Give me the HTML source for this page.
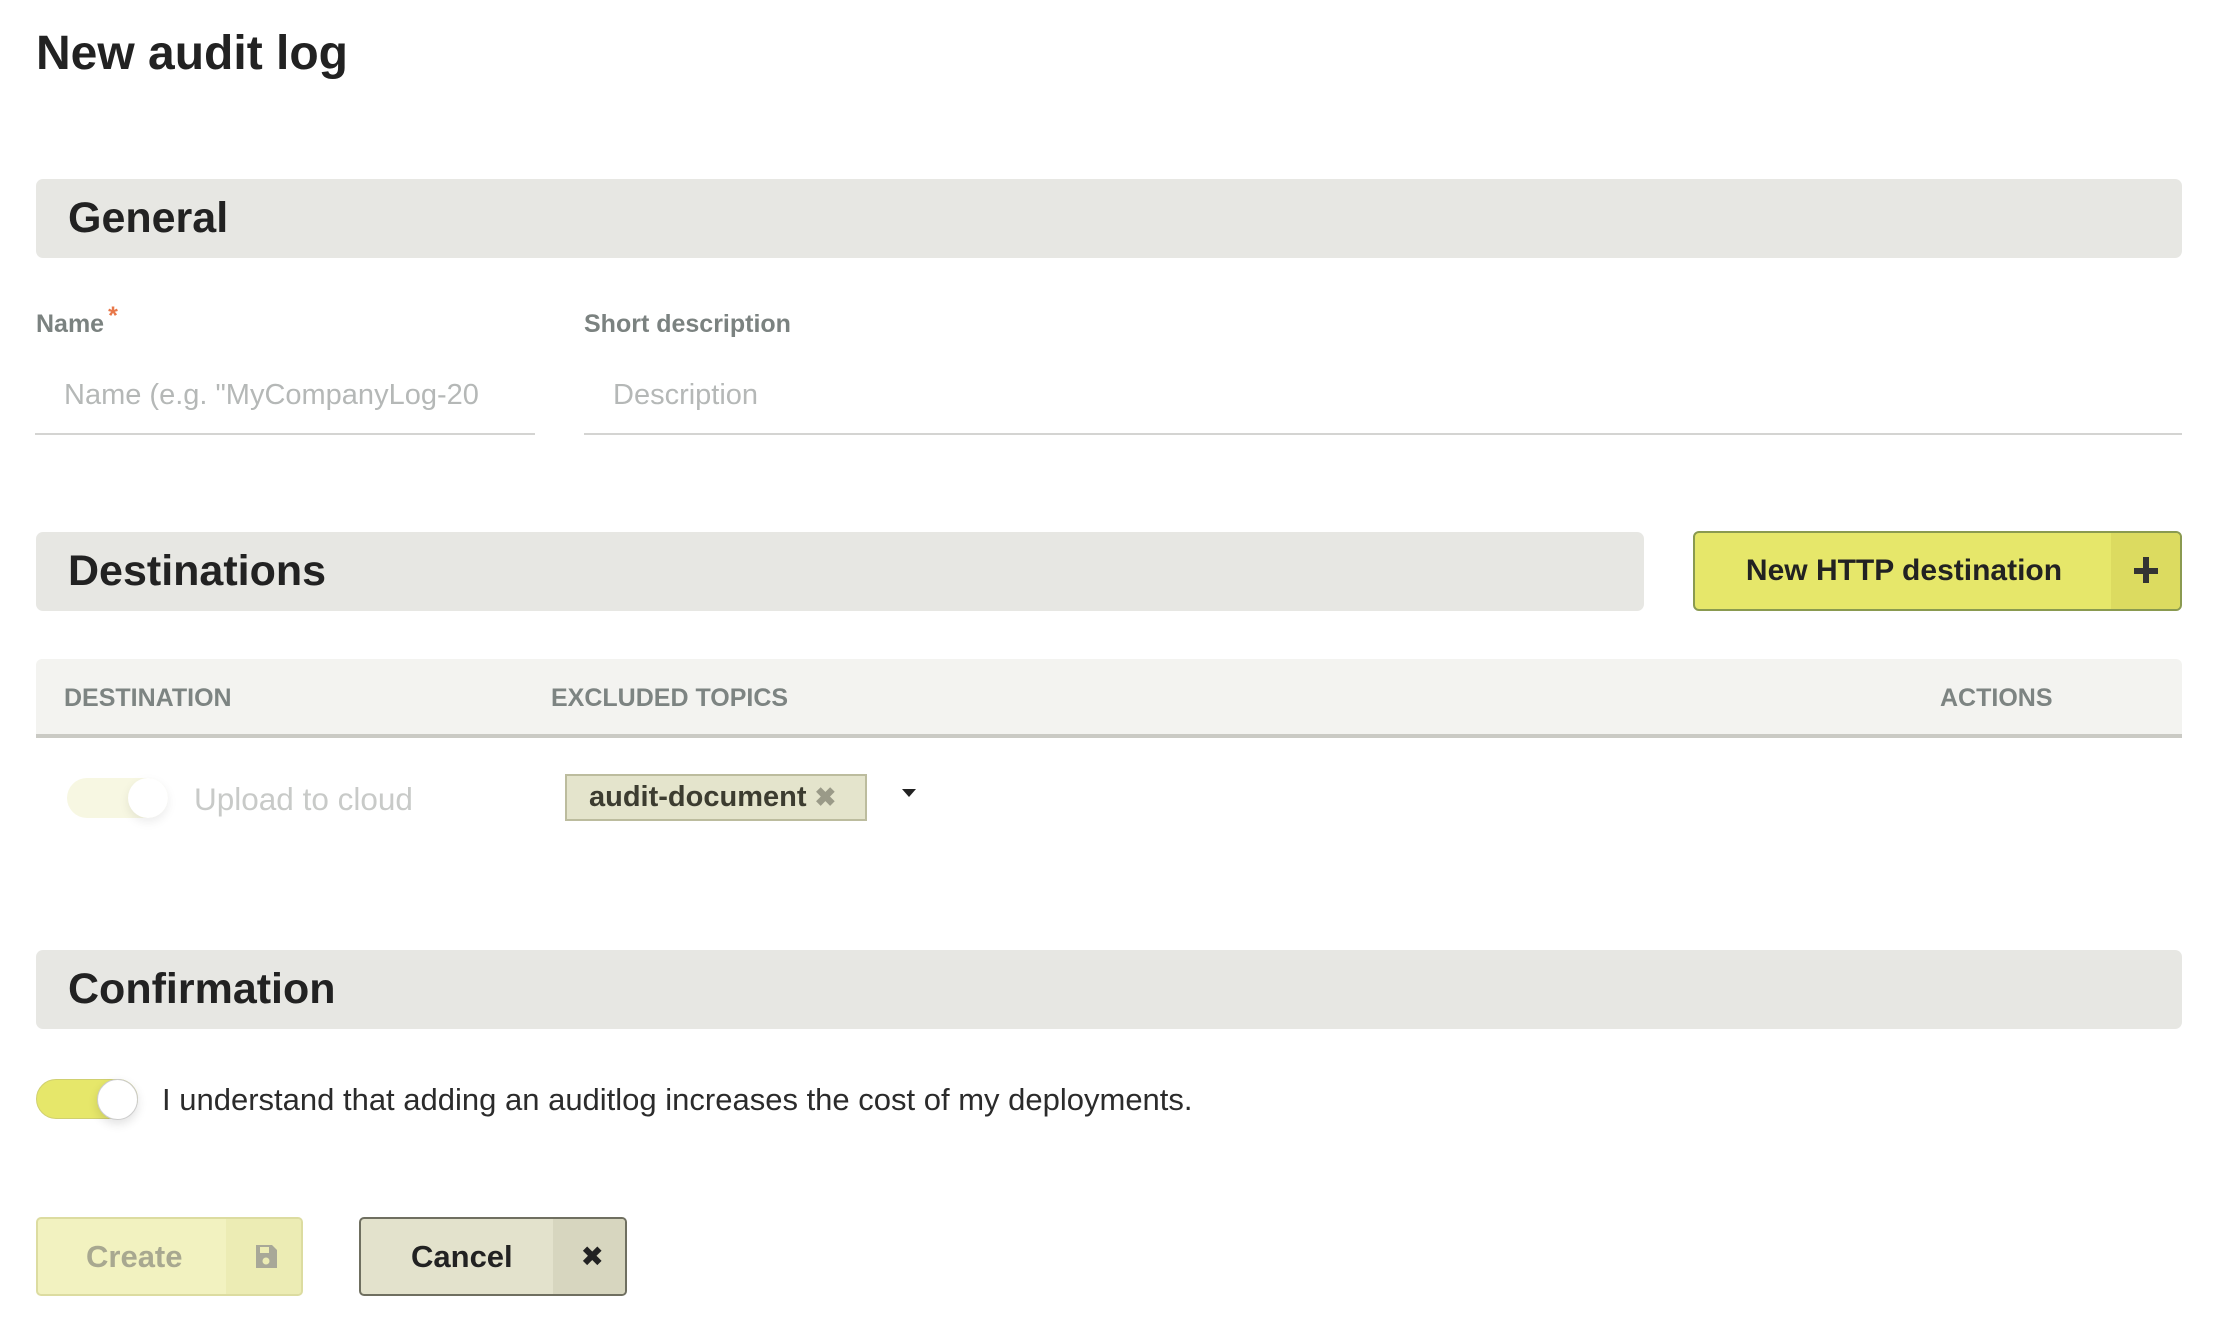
<!DOCTYPE html>
<html><head><meta charset="utf-8"><style>
*{box-sizing:border-box;margin:0;padding:0}
body{width:2226px;height:1328px;background:#fff;font-family:"Liberation Sans",sans-serif;position:relative;overflow:hidden;color:#222}
.abs{position:absolute}
.bar{position:absolute;left:36px;background:#e7e7e3;border-radius:7px;height:79px}
.bar span{position:absolute;left:32px;top:0;line-height:79px;font-size:43px;font-weight:bold;color:#222}
.lbl{font-size:25px;font-weight:bold;color:#7b8280}
.ph{font-size:29px;color:#b5b8b7}
.th{font-size:25px;font-weight:bold;color:#7d8482;top:659px;line-height:79px}
</style></head><body>
<div class="abs" style="left:36px;top:24px;font-size:48px;font-weight:bold;line-height:60px;color:#222">New audit log</div>

<div class="bar" style="top:179px;width:2146px"><span>General</span></div>

<div class="abs lbl" style="left:36px;top:310px">Name<span style="color:#e8784a;position:relative;top:-8px;left:4px">*</span></div>
<div class="abs lbl" style="left:584px;top:310px">Short description</div>
<div class="abs ph" style="left:64px;top:379px;width:450px;overflow:hidden;white-space:nowrap">Name (e.g. "MyCompanyLog-20</div>
<div class="abs" style="left:35px;top:433px;width:500px;height:2px;background:#d4d4d2"></div>
<div class="abs ph" style="left:613px;top:379px">Description</div>
<div class="abs" style="left:584px;top:433px;width:1598px;height:2px;background:#d4d4d2"></div>

<div class="bar" style="top:532px;width:1608px"><span>Destinations</span></div>
<div class="abs" style="left:1693px;top:531px;width:489px;height:80px;background:#e6e76a;border:2px solid #8a9a50;border-radius:6px;overflow:hidden">
 <div class="abs" style="left:0;top:0;width:418px;line-height:76px;text-align:center;font-size:30px;font-weight:bold;color:#222">New HTTP destination</div>
 <div class="abs" style="right:0;top:0;width:69px;height:76px;background:#dcdb60"></div>
 <div class="abs" style="right:22px;top:27px;width:24px;height:6px;background:#333;margin-top:8px"></div>
 <div class="abs" style="right:31px;top:24px;width:6px;height:26px;background:#333"></div>
</div>

<div class="abs" style="left:36px;top:659px;width:2146px;height:79px;background:#f3f3f0;border-radius:6px 6px 0 0;border-bottom:4px solid #cacac4"></div>
<div class="abs th" style="left:64px">DESTINATION</div>
<div class="abs th" style="left:551px">EXCLUDED TOPICS</div>
<div class="abs th" style="left:1940px">ACTIONS</div>

<div class="abs" style="left:67px;top:778px;width:101px;height:40px;border-radius:20px;background:#f7f7e2"></div>
<div class="abs" style="left:128px;top:778px;width:40px;height:40px;border-radius:50%;background:#fff;box-shadow:0 4px 10px rgba(0,0,0,0.08)"></div>
<div class="abs" style="left:194px;top:779px;line-height:40px;font-size:31.5px;color:#c8cac8">Upload to cloud</div>
<div class="abs" style="left:565px;top:774px;width:302px;height:47px;background:#e4e4cc;border:2px solid #bcbc9e;font-size:29px;font-weight:bold;color:#3c3c30;line-height:43px;padding-left:22px">audit-document <span style="color:#9a9a88;font-size:26px">&#10006;</span></div>
<div class="abs" style="left:902px;top:789px;width:0;height:0;border-left:7px solid transparent;border-right:7px solid transparent;border-top:8px solid #222"></div>

<div class="bar" style="top:950px;width:2146px"><span>Confirmation</span></div>
<div class="abs" style="left:36px;top:1079px;width:102px;height:40px;border-radius:20px;background:#e6e76a;border:1px solid #d0d070"></div>
<div class="abs" style="left:97px;top:1079px;width:41px;height:41px;border-radius:50%;background:#fff;border:1px solid #ccc;box-shadow:0 4px 10px rgba(0,0,0,0.12)"></div>
<div class="abs" style="left:162px;top:1080px;line-height:40px;font-size:31px;color:#2b2b2b">I understand that adding an auditlog increases the cost of my deployments.</div>

<div class="abs" style="left:36px;top:1217px;width:267px;height:79px;background:#f2f2c0;border:2px solid #dcdca0;border-radius:5px;overflow:hidden">
 <div class="abs" style="right:0;top:0;width:75px;height:75px;background:#ececb4"></div>
 <div class="abs" style="left:48px;top:0;line-height:75px;font-size:31px;font-weight:bold;color:#a8a890">Create</div>
 <svg class="abs" style="right:23px;top:25px" width="24" height="26" viewBox="0 0 24 26"><path d="M2 1h16l5 5v18H2z" fill="#a8a898"/><rect x="6" y="3" width="9" height="6" fill="#ececb4"/><circle cx="12" cy="17" r="3.5" fill="#ececb4"/></svg>
</div>
<div class="abs" style="left:359px;top:1217px;width:268px;height:79px;background:#e3e2cc;border:2px solid #6f6f60;border-radius:5px;overflow:hidden">
 <div class="abs" style="right:0;top:0;width:72px;height:75px;background:#d7d6bf"></div>
 <div class="abs" style="left:50px;top:0;line-height:75px;font-size:31px;font-weight:bold;color:#222">Cancel</div>
 <div class="abs" style="right:21px;top:0;line-height:75px;font-size:28px;color:#222">&#10006;</div>
</div>
</body></html>
